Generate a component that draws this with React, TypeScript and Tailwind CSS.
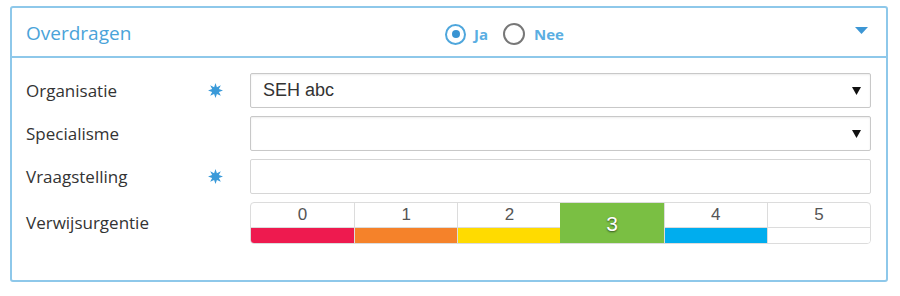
const font = { fontFamily: '"Open Sans", "Liberation Sans", Arial, sans-serif' };
const arial = { fontFamily: '"Liberation Sans", Arial, sans-serif' };

function Star() {
  return (
    <svg width="15" height="15" viewBox="0 0 16 16" className="block">
      <polygon
        fill="#3a9ad9"
        points="8,0 9.5,4.4 13.7,2.3 11.6,6.5 16,8 11.6,9.5 13.7,13.7 9.5,11.6 8,16 6.5,11.6 2.3,13.7 4.4,9.5 0,8 4.4,6.5 2.3,2.3 6.5,4.4"
      />
    </svg>
  );
}

function SelectArrow() {
  return (
    <svg width="9" height="9" viewBox="0 0 9 9" className="block">
      <polygon points="0,1 9,1 4.5,9" fill="#111" />
    </svg>
  );
}

const urgencies = [
  { n: "0", color: "bg-[#ee1a4f]" },
  { n: "1", color: "bg-[#f5822a]" },
  { n: "2", color: "bg-[#ffdb00]" },
  { n: "3", color: "bg-[#7abf43]", active: true },
  { n: "4", color: "bg-[#00adee]" },
  { n: "5", color: "bg-white" },
];

function Row({ label, required, children }: { label: string; required?: boolean; children: React.ReactNode }) {
  return (
    <div className="flex items-center">
      <div className="w-[182px] text-[17px] text-[#333]">{label}</div>
      <div className="w-[42px] flex items-center">{required && <Star />}</div>
      <div className="flex-1">{children}</div>
    </div>
  );
}

export default function App() {
  return (
    <div className="w-[900px] h-[296px] bg-white pt-[6px] pl-[10px]" style={font}>
      <div className="w-[878px] h-[276px] border-2 border-[#8ec8ea] rounded-[3px]">
        {/* header */}
        <div className="h-[50px] border-b-2 border-[#8ec8ea] flex items-center pl-[14px] pr-[18px]">
          <div className="w-[419px] text-[19px] text-[#4aa3d9] pt-[3px]">Overdragen</div>
          <div className="flex items-center pt-[4px]">
            <div className="w-[21px] h-[21px] rounded-full border-2 border-[#4ea6dc] flex items-center justify-center">
              <div className="w-[8px] h-[8px] rounded-full bg-[#3a94d2]" />
            </div>
            <span className="ml-[8px] text-[15px] font-bold text-[#5aaee2]">Ja</span>
            <div className="ml-[15px] w-[22px] h-[22px] rounded-full border-2 border-[#777]" />
            <span className="ml-[9px] text-[15px] font-bold text-[#5aaee2]">Nee</span>
          </div>
          <div className="flex-1 flex justify-end pb-[3px]">
            <svg width="13" height="7" viewBox="0 0 13 7" className="block">
              <polygon points="0,0 13,0 6.5,7" fill="#3c96d4" />
            </svg>
          </div>
        </div>

        {/* form */}
        <div className="pl-[14px] pr-[15px] pt-[15px] flex flex-col gap-[8px]">
          <Row label="Organisatie" required>
            <div className="h-[35px] border border-[#c8c8c8] rounded-[2px] shadow-[inset_0_1px_2px_rgba(0,0,0,0.08)] flex items-center pl-[12px] pr-[9px]">
              <span className="flex-1 text-[18px] text-[#333]" style={arial}>SEH abc</span>
              <SelectArrow />
            </div>
          </Row>
          <Row label="Specialisme">
            <div className="h-[35px] border border-[#c8c8c8] rounded-[2px] shadow-[inset_0_1px_2px_rgba(0,0,0,0.08)] flex items-center pl-[12px] pr-[9px]">
              <span className="flex-1" />
              <SelectArrow />
            </div>
          </Row>
          <Row label="Vraagstelling" required>
            <div className="h-[35px] border border-[#d6d6d6] rounded-[2px]" />
          </Row>
          <Row label="Verwijsurgentie">
            <div className="h-[42px] border border-[#dcdcdc] rounded-[4px] overflow-hidden grid grid-cols-6" style={arial}>
              {urgencies.map((u, i) =>
                u.active ? (
                  <div
                    key={u.n}
                    className={`${u.color} flex items-center justify-center text-[21px] text-white pt-[2px] [text-shadow:0_1px_2px_rgba(0,0,0,0.6)]`}
                  >
                    {u.n}
                  </div>
                ) : (
                  <div key={u.n} className={`flex flex-col ${i > 0 ? "border-l border-[#dcdcdc]" : ""}`}>
                    <div className="h-[25px] border-b border-[#dcdcdc] flex items-center justify-center text-[17px] text-[#555]">
                      {u.n}
                    </div>
                    <div className={`flex-1 ${u.color}`} />
                  </div>
                )
              )}
            </div>
          </Row>
        </div>
      </div>
    </div>
  );
}
